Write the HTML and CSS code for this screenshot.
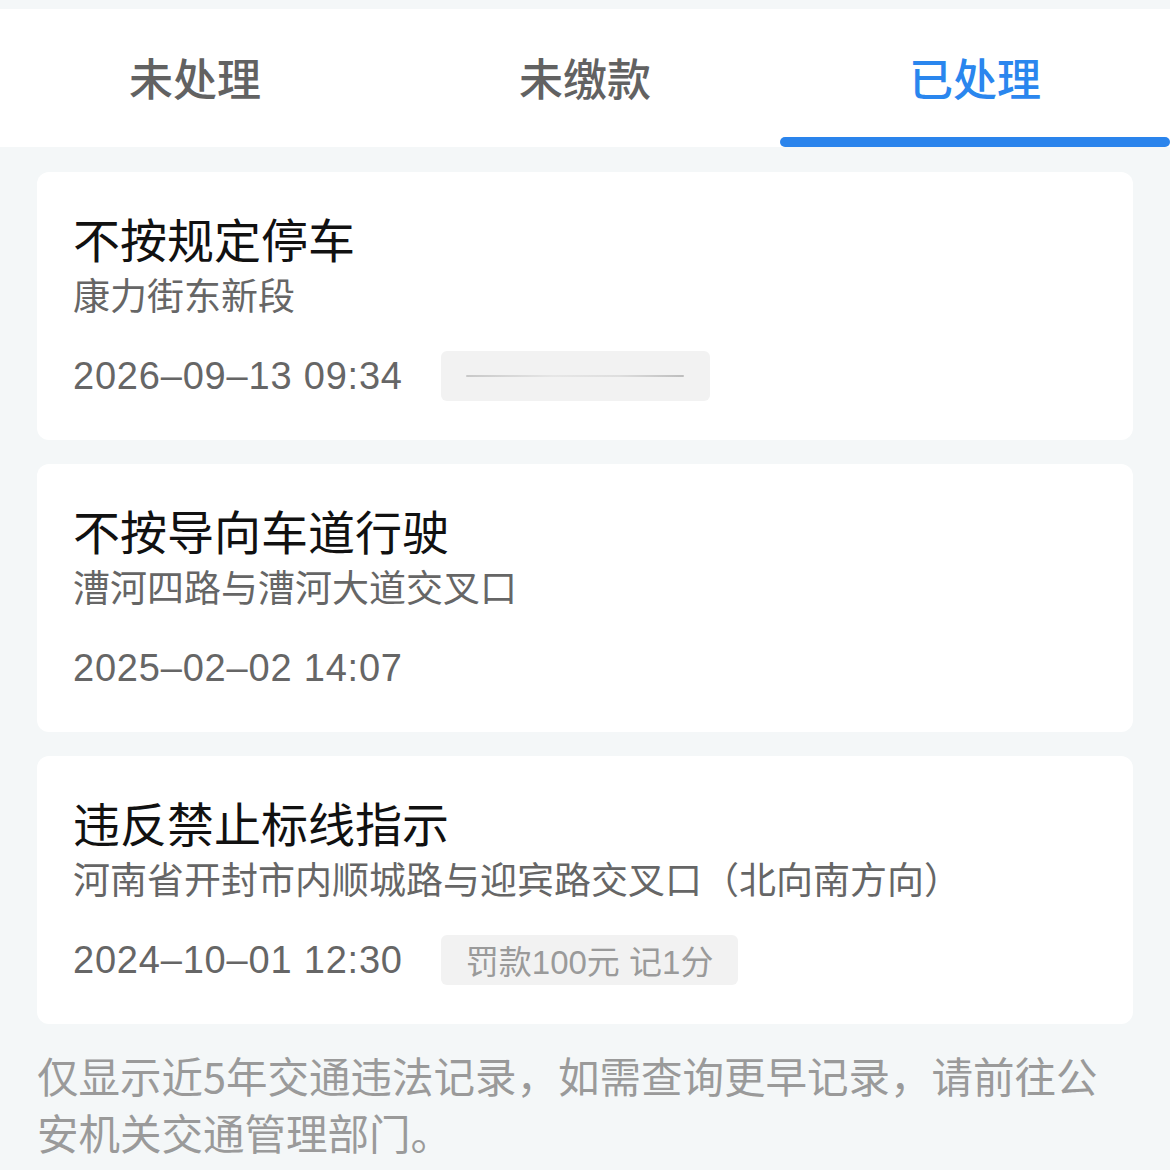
FILE: index.html
```html
<!DOCTYPE html>
<html lang="zh-CN">
<head>
<meta charset="utf-8">
<title>违法记录</title>
<link rel="stylesheet" href="styles.css">
</head>
<body>
<div class="page">
  <nav class="tabs">
    <div class="tab"><span class="tab-label">未处理</span><span class="tab-bar"></span></div>
    <div class="tab"><span class="tab-label">未缴款</span><span class="tab-bar"></span></div>
    <div class="tab active"><span class="tab-label">已处理</span><span class="tab-bar"></span></div>
  </nav>
  <main class="list">
    <section class="card">
      <div class="title">不按规定停车</div>
      <div class="addr">康力街东新段</div>
      <div class="meta">
        <span class="date">2026–09–13 09:34</span>
        <span class="tag blank"><span class="tag-line"></span></span>
      </div>
    </section>
    <section class="card">
      <div class="title">不按导向车道行驶</div>
      <div class="addr">漕河四路与漕河大道交叉口</div>
      <div class="meta">
        <span class="date">2025–02–02 14:07</span>
      </div>
    </section>
    <section class="card">
      <div class="title">违反禁止标线指示</div>
      <div class="addr">河南省开封市内顺城路与迎宾路交叉口（北向南方向）</div>
      <div class="meta">
        <span class="date">2024–10–01 12:30</span>
        <span class="tag">罚款100元 记1分</span>
      </div>
    </section>
    <p class="note">仅显示近5年交通违法记录，如需查询更早记录，请前往公安机关交通管理部门。</p>
  </main>
</div>
</body>
</html>
```
FILE: styles.css
```css
* { box-sizing: border-box; }
html, body { margin: 0; padding: 0; }
body {
  background: #f4f7f8;
  font-family: "Liberation Sans", "Noto Sans CJK SC", sans-serif;
  width: 1170px;
}
.page { padding-top: 9px; }
.tabs {
  display: grid;
  grid-template-columns: repeat(3, 1fr);
  height: 138px;
  background: #fff;
}
.tab {
  display: flex;
  flex-direction: column;
  padding-top: 7px;
  color: #626262;
}
.tab-label {
  flex: 1;
  display: flex;
  align-items: center;
  justify-content: center;
  font-family: "Noto Sans CJK SC", sans-serif;
  font-size: 44px;
  font-weight: 500;
}
.tab-bar {
  height: 10px;
  border-radius: 5px;
  background: transparent;
}
.tab.active { color: #2a86ee; }
.tab.active .tab-bar { background: #2a84ec; }
.list {
  padding: 25px 37px 0;
  display: flex;
  flex-direction: column;
  gap: 24px;
}
.card {
  background: #fff;
  border-radius: 12px;
  padding: 35px 36px 39px;
}
.title {
  font-family: "Noto Sans CJK SC", sans-serif;
  font-size: 47px;
  line-height: 61px;
  color: #111;
}
.addr {
  font-family: "Noto Sans CJK SC", sans-serif;
  font-size: 37px;
  line-height: 52px;
  color: #666;
}
.meta {
  margin-top: 31px;
  height: 50px;
  display: flex;
  align-items: center;
}
.date {
  font-size: 38px;
  letter-spacing: 0.8px;
  color: #666;
}
.tag {
  margin-left: 38px;
  height: 50px;
  padding: 0 25px;
  display: flex;
  align-items: center;
  background: #f2f2f2;
  border-radius: 6px;
  font-size: 33px;
  color: #9a9a9a;
}
.tag.blank {
  width: 269px;
  justify-content: center;
}
.tag-line {
  width: 218px;
  height: 2px;
  border-radius: 1px;
  background: linear-gradient(90deg, #c8c8c8, #e6e6e6 40%, #dedede 70%, #bdbdbd);
}
.note {
  margin: -1px 0 0;
  font-family: "Noto Sans CJK SC", sans-serif;
  font-size: 41.5px;
  line-height: 57px;
  color: #9a9a9a;
}
```
